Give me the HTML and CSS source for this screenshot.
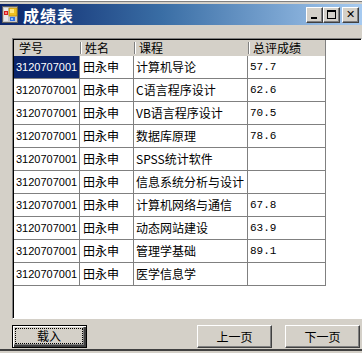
FILE: index.html
```html
<!DOCTYPE html>
<html lang="zh-CN">
<head>
    <meta charset="UTF-8">
    <title>成绩表</title>
    <link rel="stylesheet" href="styles.css">
</head>
<body>
    <div class="window">
        <div class="titlebar">
            <svg class="app-icon" width="16" height="17" viewBox="0 0 16 17">
                <rect x="0.5" y="0.5" width="15" height="16" fill="#c8c8c8" stroke="#606060"/>
                <rect x="2" y="2" width="4" height="13" fill="#e8e8e8"/>
                <rect x="2" y="5" width="4" height="4" fill="#d42020"/>
                <rect x="3" y="6" width="2" height="2" fill="#ff8080"/>
                <rect x="7" y="2" width="8" height="8" fill="#f0c020" stroke="#b08000" stroke-width="0.6"/>
                <rect x="8" y="3" width="4" height="4" fill="#ffe880"/>
                <rect x="8" y="11" width="5" height="4" fill="#3070e0"/>
                <rect x="9" y="12" width="2" height="2" fill="#90c0ff"/>
            </svg>
            <span class="title">成绩表</span>
            <div class="controls">
                <span class="ctl ctl-min"><i></i></span>
                <span class="ctl ctl-max"><i></i></span>
                <span class="ctl ctl-close">✕</span>
            </div>
        </div>

        <div class="client">
            <div class="grid">
                <div class="row head">
                    <div class="hcell">学号</div>
                    <div class="hcell">姓名</div>
                    <div class="hcell">课程</div>
                    <div class="hcell">总评成绩</div>
                </div>
                <div class="row">
                    <div class="cell id selected">3120707001</div>
                    <div class="cell name">田永申</div>
                    <div class="cell course">计算机导论</div>
                    <div class="cell score">57.7</div>
                </div>
                <div class="row">
                    <div class="cell id">3120707001</div>
                    <div class="cell name">田永申</div>
                    <div class="cell course">C语言程序设计</div>
                    <div class="cell score">62.6</div>
                </div>
                <div class="row">
                    <div class="cell id">3120707001</div>
                    <div class="cell name">田永申</div>
                    <div class="cell course">VB语言程序设计</div>
                    <div class="cell score">70.5</div>
                </div>
                <div class="row">
                    <div class="cell id">3120707001</div>
                    <div class="cell name">田永申</div>
                    <div class="cell course">数据库原理</div>
                    <div class="cell score">78.6</div>
                </div>
                <div class="row">
                    <div class="cell id">3120707001</div>
                    <div class="cell name">田永申</div>
                    <div class="cell course">SPSS统计软件</div>
                    <div class="cell score"></div>
                </div>
                <div class="row">
                    <div class="cell id">3120707001</div>
                    <div class="cell name">田永申</div>
                    <div class="cell course">信息系统分析与设计</div>
                    <div class="cell score"></div>
                </div>
                <div class="row">
                    <div class="cell id">3120707001</div>
                    <div class="cell name">田永申</div>
                    <div class="cell course">计算机网络与通信</div>
                    <div class="cell score">67.8</div>
                </div>
                <div class="row">
                    <div class="cell id">3120707001</div>
                    <div class="cell name">田永申</div>
                    <div class="cell course">动态网站建设</div>
                    <div class="cell score">63.9</div>
                </div>
                <div class="row">
                    <div class="cell id">3120707001</div>
                    <div class="cell name">田永申</div>
                    <div class="cell course">管理学基础</div>
                    <div class="cell score">89.1</div>
                </div>
                <div class="row">
                    <div class="cell id">3120707001</div>
                    <div class="cell name">田永申</div>
                    <div class="cell course">医学信息学</div>
                    <div class="cell score"></div>
                </div>
            </div>

            <div class="actions">
                <button class="btn btn-default"><span class="focus">载入</span></button>
                <button class="btn btn-prev">上一页</button>
                <button class="btn">下一页</button>
            </div>
        </div>
    </div>
</body>
</html>
```

FILE: styles.css
```css
body {
    margin: 0;
    width: 362px;
    height: 353px;
    overflow: hidden;
    background-color: #d4d0c8;
    font-family: "Noto Sans CJK SC", sans-serif;
    font-size: 12px;
}

.window {
    width: 362px;
    height: 351px;
    padding-top: 3px;
    box-sizing: border-box;
    background-color: #d4d0c8;
    border-top: 1px solid #ffffff;
    border-bottom: 2px solid #404040;
    box-shadow: 0 1px 0 #808080 inset;
}

.titlebar {
    height: 21px;
    display: flex;
    align-items: center;
    background: linear-gradient(to right, #0a246a 0%, #3a6ea5 45%, #a6caf0 100%);
}

.app-icon {
    margin-left: 2px;
    margin-right: 5px;
}

.title {
    color: #ffffff;
    font-size: 16px;
    font-weight: bold;
    letter-spacing: 1px;
    line-height: 16px;
}

.controls {
    margin-left: auto;
    margin-right: 3px;
    display: flex;
}

.ctl {
    width: 17px;
    height: 16px;
    box-sizing: border-box;
    background-color: #d4d0c8;
    border-top: 1px solid #ffffff;
    border-left: 1px solid #ffffff;
    border-right: 1px solid #404040;
    border-bottom: 1px solid #404040;
    box-shadow: -1px -1px 0 #808080 inset;
    display: flex;
    align-items: center;
    justify-content: center;
}

.ctl-min i {
    width: 6px;
    height: 2px;
    background-color: #000;
    margin-top: 6px;
    margin-right: 2px;
}

.ctl-max i {
    width: 9px;
    height: 9px;
    box-sizing: border-box;
    border: 1px solid #000;
    border-top-width: 2px;
}

.ctl-close {
    margin-left: 2px;
    font-family: "DejaVu Sans", sans-serif;
    font-size: 11px;
    font-weight: bold;
    line-height: 12px;
    color: #000;
}

.client {
    padding: 13px 0 0 12px;
}

.grid {
    width: 350px;
    height: 281px;
    box-sizing: border-box;
    background-color: #ffffff;
    border-top: 1px solid #808080;
    border-left: 1px solid #808080;
    border-right: 1px solid #ffffff;
    border-bottom: 1px solid #ffffff;
    box-shadow: 1px 1px 0 #000 inset;
    padding: 1px 0 0 1px;
}

.row {
    display: grid;
    grid-template-columns: 66px 54px 114px 78px;
    height: 23px;
}

.row.head {
    height: 16px;
}

.hcell {
    background-color: #d4d0c8;
    padding-left: 5px;
    line-height: 16px;
    color: #000;
    position: relative;
    white-space: nowrap;
}

.hcell + .hcell::before {
    content: "";
    position: absolute;
    left: 0;
    top: 2px;
    bottom: 2px;
    width: 1px;
    background-color: #808080;
    box-shadow: 1px 0 0 #ffffff;
}

.hcell:last-child {
    border-right: 1px solid #808080;
}

.cell {
    border-right: 1px solid #808080;
    border-bottom: 1px solid #808080;
    padding-left: 2px;
    line-height: 22px;
    color: #000;
    white-space: nowrap;
    overflow: hidden;
}

.cell.id {
    font-family: "Liberation Sans", sans-serif;
    font-size: 11px;
}

.cell.name {
    padding-left: 3px;
}

.cell.score {
    font-family: "Liberation Mono", monospace;
    font-size: 11px;
}

.cell.selected {
    background-color: #0a246a;
    color: #ffffff;
}

.actions {
    width: 348px;
    margin-top: 6px;
    display: flex;
    gap: 13px;
}

.btn {
    width: 75px;
    height: 23px;
    padding: 0;
    box-sizing: border-box;
    background-color: #d4d0c8;
    font-family: "Noto Sans CJK SC", sans-serif;
    font-size: 12px;
    color: #000;
    border-top: 1px solid #ffffff;
    border-left: 1px solid #ffffff;
    border-right: 1px solid #404040;
    border-bottom: 1px solid #404040;
    box-shadow: -1px -1px 0 #808080 inset;
}

.btn-default {
    border: 1px solid #000;
    box-shadow: 1px 1px 0 #ffffff inset, -2px -2px 0 #404040 inset, -3px -3px 0 #808080 inset;
    display: flex;
    padding: 3px 4px 4px 3px;
}

.btn-default .focus {
    flex: 1;
    outline: 1px dotted #000;
    line-height: 14px;
    display: flex;
    align-items: center;
    justify-content: center;
}

.btn-prev {
    margin-left: auto;
}
```
